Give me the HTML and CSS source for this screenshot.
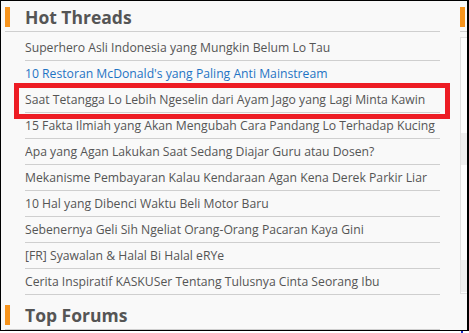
FILE: index.html
```html
<!DOCTYPE html>
<html>
<head>
<meta charset="utf-8">
<link rel="stylesheet" href="styles.css">
</head>
<body>
<div class="frame">
  <div class="main">
    <div class="section-head"><span class="bar"></span><h2>Hot Threads</h2></div>
    <ul class="threads">
      <li>Superhero Asli Indonesia yang Mungkin Belum Lo Tau</li>
      <li class="link">10 Restoran McDonald's yang Paling Anti Mainstream</li>
      <li>Saat Tetangga Lo Lebih Ngeselin dari Ayam Jago yang Lagi Minta Kawin</li>
      <li>15 Fakta Ilmiah yang Akan Mengubah Cara Pandang Lo Terhadap Kucing</li>
      <li>Apa yang Agan Lakukan Saat Sedang Diajar Guru atau Dosen?</li>
      <li>Mekanisme Pembayaran Kalau Kendaraan Agan Kena Derek Parkir Liar</li>
      <li>10 Hal yang Dibenci Waktu Beli Motor Baru</li>
      <li>Sebenernya Geli Sih Ngeliat Orang-Orang Pacaran Kaya Gini</li>
      <li>[FR] Syawalan &amp; Halal Bi Halal eRYe</li>
      <li>Cerita Inspiratif KASKUSer Tentang Tulusnya Cinta Seorang Ibu</li>
    </ul>
    <div class="section-head"><span class="bar"></span><h2>Top Forums</h2></div>
  </div>
  <div class="side">
    <div class="section-head side-head"><span class="bar"></span></div>
    <div class="side-box">
      <div class="blk"></div>
      <div class="blk"></div>
    </div>
  </div>
  <div class="highlight"></div>
</div>
<div class="dot"></div>
</body>
</html>
```
FILE: styles.css
```css
html, body { margin: 0; padding: 0; background: #fff; }
body { font-family: "Open Sans", "Liberation Sans", sans-serif; position: relative; width: 469px; height: 333px; overflow: hidden; }
.frame {
  box-sizing: border-box;
  width: 469px; height: 331px;
  border-top: 1px solid #000; border-left: 1px solid #000;
  border-right: 2px solid #000; border-bottom: 1px solid #000;
  background: #f9f9f9;
  display: flex;
  padding-left: 4px;
  overflow: hidden;
  position: relative;
}
.main { width: 435px; flex: none; }
.side { margin-left: 20px; flex: 1; }
.section-head {
  display: flex; align-items: flex-end;
  padding-top: 6px; padding-bottom: 4px;
  border-bottom: 1px solid #cfcfcf;
}
.bar { width: 5px; height: 20px; background: #f7941d; flex: none; }
.section-head h2 {
  margin: 0 0 0 15px; font-size: 17.5px; font-weight: 700; color: #555;
  line-height: 20px; height: 20px;
}
.threads { list-style: none; margin: 3px 0 4px 0; padding: 0; }
.threads li {
  margin-left: 20px; height: 25px; line-height: 25px;
  border-bottom: 1px solid #cfcfcf;
  font-size: 12.2px; color: #555; white-space: nowrap; overflow: hidden;
}
.threads li.link { color: #1f74c4; }
.side-head { height: 20px; }
.side-box {
  margin-top: 5px; height: 257px; background: #fff;
  border: 1px solid #e3e3e3; border-right: none;
  padding-top: 95px; box-sizing: border-box;
}
.blk { height: 32px; background: #efefef; }
.blk + .blk { margin-top: 95px; }
.highlight {
  position: absolute; left: 13px; top: 82px;
  width: 436px; height: 36px; box-sizing: border-box;
  border: 5px solid #ed1c24;
}
.dot { position: absolute; left: 461px; top: 331px; width: 2px; height: 2px; background: #2233cc; }
```
